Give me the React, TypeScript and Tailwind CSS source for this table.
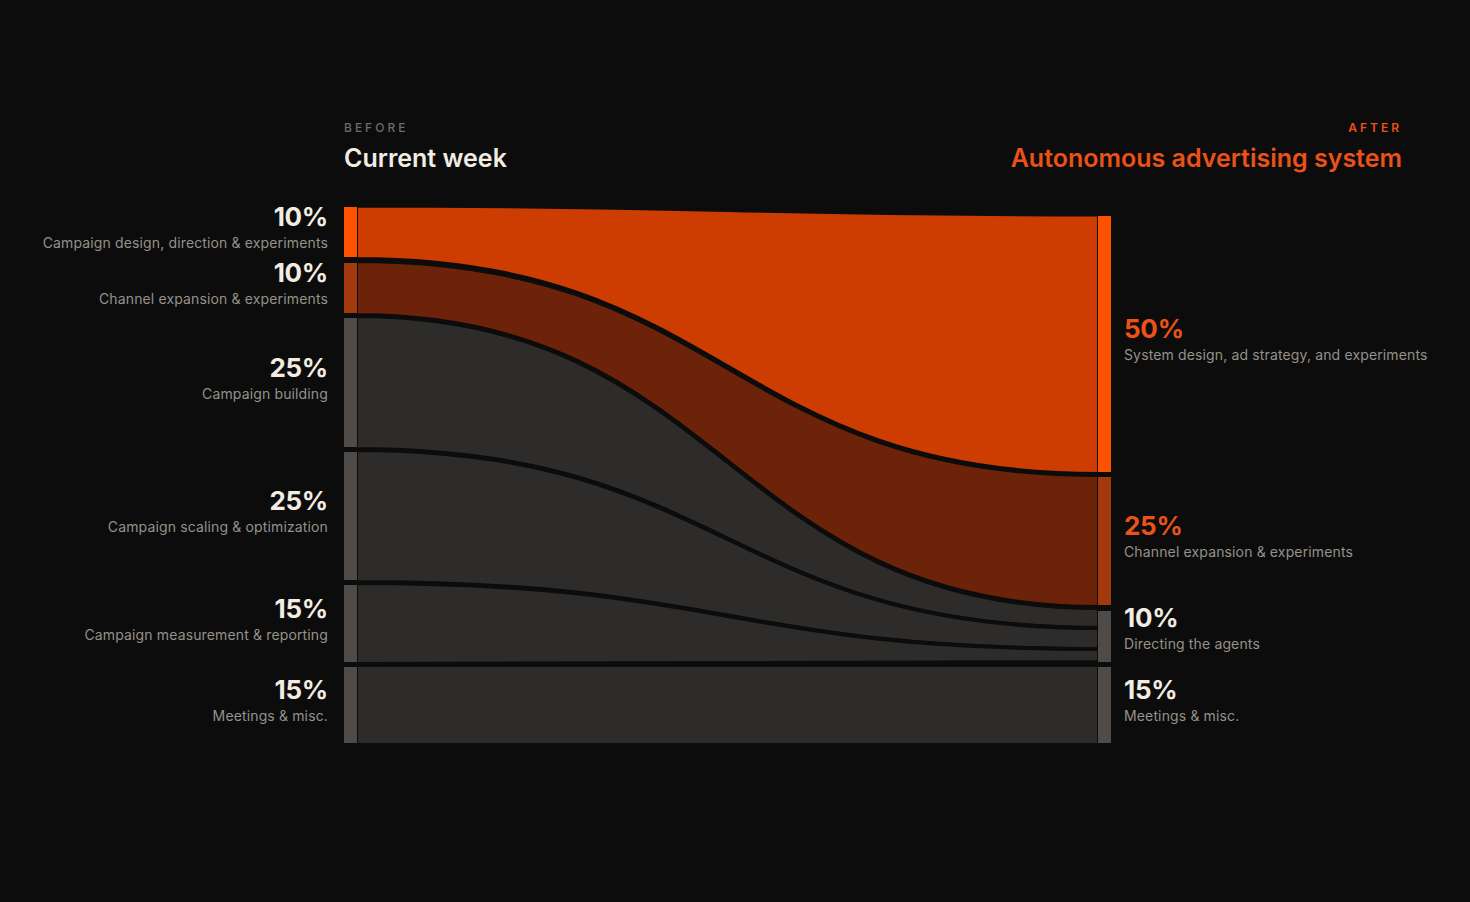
import React from "react";

type Label = { pct: string; text: string; slot: string; orange?: boolean; pad?: string };

const leftLabels: Label[] = [
  { pct: "10%", text: "Campaign design, direction & experiments", slot: "h-[50px]" },
  { pct: "10%", text: "Channel expansion & experiments", slot: "h-[50px] mt-[6px]" },
  { pct: "25%", text: "Campaign building", slot: "h-[129px] mt-[5px]" },
  { pct: "25%", text: "Campaign scaling & optimization", slot: "h-[128px] mt-[5px]" },
  { pct: "15%", text: "Campaign measurement & reporting", slot: "h-[77px] mt-[5px]" },
  { pct: "15%", text: "Meetings & misc.", slot: "h-[76px] mt-[5px]" },
];

const rightLabels: Label[] = [
  { pct: "50%", text: "System design, ad strategy, and experiments", slot: "h-[256px] mt-[9px]", orange: true },
  { pct: "25%", text: "Channel expansion & experiments", slot: "h-[128px] mt-[5px]", orange: true },
  { pct: "10%", text: "Directing the agents", slot: "h-[51px] mt-[6px]", pad: "pb-[15px]" },
  { pct: "15%", text: "Meetings & misc.", slot: "h-[76px] mt-[5px]" },
];

const X0 = 12;
const X1 = 755;
const XM = (X0 + X1) / 2;
const E = 2;

function flow(yt0: number, yb0: number, yt1: number, yb1: number) {
  const a = yt0 - E;
  const b = yb0 + E;
  const c = yt1 - E;
  const d = yb1 + E;
  return `M${X0},${a} C${XM},${a} ${XM},${c} ${X1},${c} L${X1},${d} C${XM},${d} ${XM},${b} ${X0},${b} Z`;
}

const flows = [
  { d: flow(0.5, 50, 9.5, 265), fill: "#cd3c00" },
  { d: flow(56, 106, 270, 398), fill: "#6c230a" },
  { d: flow(111, 240, 403, 419), fill: "#2d2c2b" },
  { d: flow(245, 373, 423, 440), fill: "#2d2c2b" },
  { d: flow(378, 455, 444, 453), fill: "#2d2c2b" },
  { d: flow(460, 536, 460, 536), fill: "#2d2c2b" },
];

const leftBars = [
  { y: 0, h: 50, fill: "#ff5200" },
  { y: 56, h: 50, fill: "#a33a0d" },
  { y: 111, h: 129, fill: "#4e4b48" },
  { y: 245, h: 128, fill: "#4e4b48" },
  { y: 378, h: 77, fill: "#4e4b48" },
  { y: 460, h: 76, fill: "#4e4b48" },
];

const rightBars = [
  { y: 9, h: 256, fill: "#ff5200" },
  { y: 270, h: 128, fill: "#a33a0d" },
  { y: 404, h: 51, fill: "#4e4b48" },
  { y: 460, h: 76, fill: "#4e4b48" },
];

function LabelBlock({ l, align }: { l: Label; align: "left" | "right" }) {
  const pad = l.pad ?? "pb-[8px]";
  return (
    <div
      className={
        align === "right"
          ? `flex flex-col items-end ${pad}`
          : `flex flex-col items-start ${pad}`
      }
    >
      <div
        className={
          l.orange
            ? "text-[26px] leading-[28px] font-bold tracking-[-0.01em] text-[#ea5219]"
            : "text-[26px] leading-[28px] font-bold tracking-[-0.01em] text-[#f2ece2]"
        }
      >
        {l.pct}
      </div>
      <div className="mt-[2px] text-[14px] leading-[20px] tracking-[0.01em] text-[#96918a] whitespace-nowrap">
        {l.text}
      </div>
    </div>
  );
}

export default function App() {
  return (
    <div className="min-h-screen w-full bg-[#0c0c0c] font-[Inter,sans-serif] antialiased">
      <div className="pt-[120px] pl-[344px] pr-[68px] flex justify-between">
        <div className="flex flex-col items-start">
          <div className="text-[12px] leading-[16px] font-medium tracking-[0.25em] text-[#6e6b67]">
            BEFORE
          </div>
          <div className="mt-[7px] text-[25px] leading-[30px] font-semibold tracking-[0em] text-[#f2ece2]">
            Current week
          </div>
        </div>
        <div className="flex flex-col items-end">
          <div className="text-[12px] leading-[16px] font-semibold tracking-[0.25em] text-[#ea5219]">
            AFTER
          </div>
          <div className="mt-[7px] text-[25px] leading-[30px] font-semibold tracking-[0em] text-[#ea5219]">
            Autonomous advertising system
          </div>
        </div>
      </div>

      <div className="mt-[34px] flex items-start">
        <div className="w-[344px] pr-[16px] flex flex-col">
          {leftLabels.map((l, i) => (
            <div key={i} className={`${l.slot} flex items-center justify-end`}>
              <LabelBlock l={l} align="right" />
            </div>
          ))}
        </div>

        <svg width={767} height={536} viewBox="0 0 767 536" className="shrink-0 block">
          {flows.map((f, i) => (
            <path key={i} d={f.d} fill={f.fill} stroke="#0c0c0c" strokeWidth={4} strokeLinejoin="round" />
          ))}
          {leftBars.map((b, i) => (
            <rect key={`l${i}`} x={0} y={b.y} width={13} height={b.h} fill={b.fill} />
          ))}
          {rightBars.map((b, i) => (
            <rect key={`r${i}`} x={754} y={b.y} width={13} height={b.h} fill={b.fill} />
          ))}
        </svg>

        <div className="pl-[13px] flex flex-col">
          {rightLabels.map((l, i) => (
            <div key={i} className={`${l.slot} flex items-center justify-start`}>
              <LabelBlock l={l} align="left" />
            </div>
          ))}
        </div>
      </div>
    </div>
  );
}
